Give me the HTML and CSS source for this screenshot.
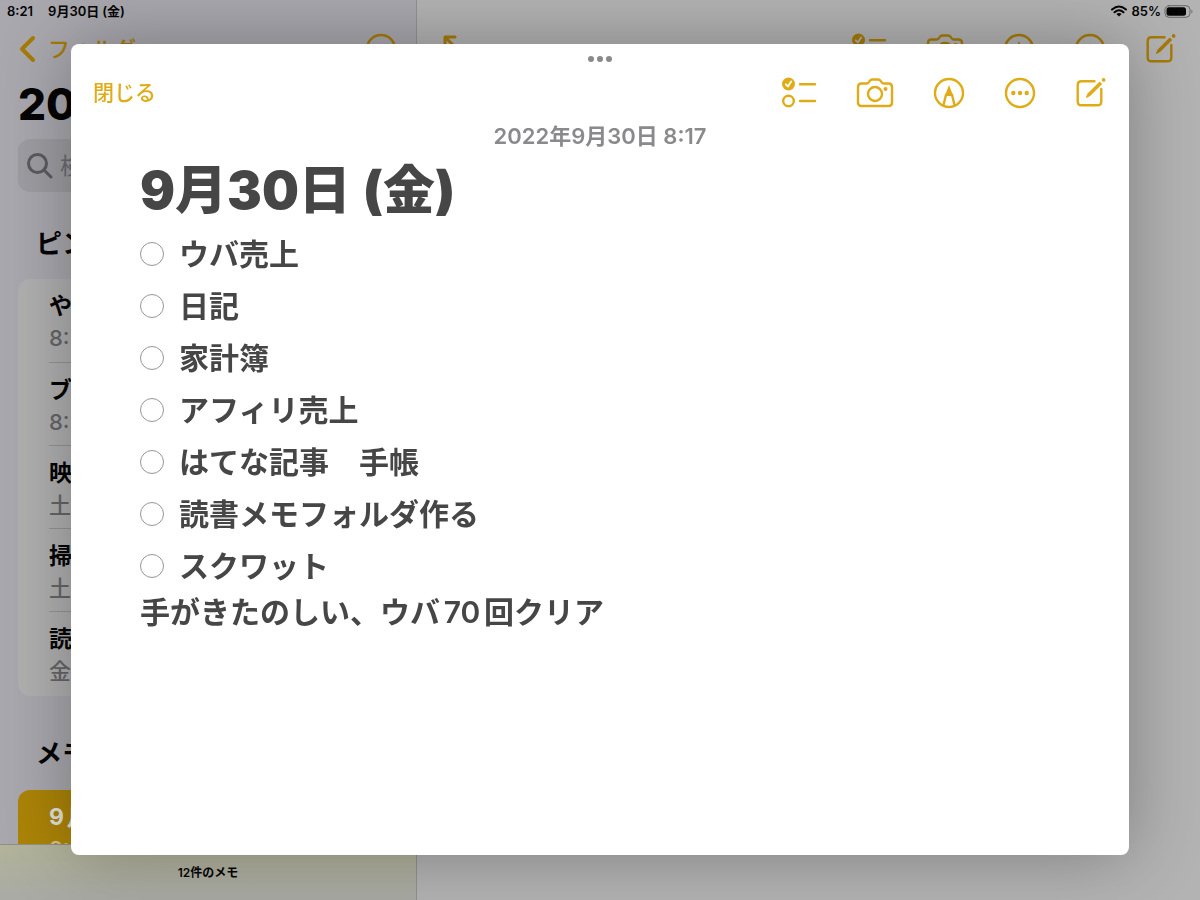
FILE: index.html
```
<!DOCTYPE html>
<html lang="ja">
  <head>
    <meta charset="UTF-8" />
    <meta name="viewport" content="width=device-width, initial-scale=1.0" />
    <title>メモ</title>
    <link rel="stylesheet" href="styles.css">
  </head>
  <body>
    <svg class="sprite" aria-hidden="true">
      <symbol id="checklist" viewBox="0 0 36 32">
        <circle cx="7.500" cy="7" r="6.500" class="dot" />
        <path class="tick" d="M4.800 7.300 6.900 9.500 10.200 4.500" />
        <circle cx="7.500" cy="24" r="5.300" />
        <path d="M19 7.200H34M19 24H34" />
      </symbol>
      <symbol id="camera" viewBox="0 0 38 32">
        <path d="M5.500 6.500h5.200c1 0 1.500-.4 2-1.100l1.300-1.800c.6-.8 1.200-1.100 2.200-1.100h6c1 0 1.600.3 2.200 1.100l1.300 1.800c.5.700 1 1.100 2 1.100h4.800c2.200 0 3.500 1.300 3.500 3.500v15.500c0 2.200-1.300 3.500-3.500 3.500h-27C3.300 29 2 27.700 2 25.500V10c0-2.200 1.300-3.500 3.500-3.500z" />
        <circle cx="19" cy="17" r="7" />
        <circle cx="29.500" cy="12" r="2" class="dot" />
      </symbol>
      <symbol id="pen" viewBox="0 0 32 32">
        <circle cx="16" cy="16" r="14" />
        <path d="M10.500 28 13 17.800M21.500 28 19 17.800" />
        <path class="dot" d="M16 8 20.200 19H11.800Z" />
      </symbol>
      <symbol id="more" viewBox="0 0 32 32">
        <circle cx="16" cy="16" r="14" />
        <circle cx="9.300" cy="16" r="2.200" class="dot" />
        <circle cx="16" cy="16" r="2.200" class="dot" />
        <circle cx="22.700" cy="16" r="2.200" class="dot" />
      </symbol>
      <symbol id="compose" viewBox="0 0 32 32">
        <path d="M19.500 4.200H6.500C4 4.200 2.700 5.700 2.700 8V24.500c0 2.500 1.300 3.800 3.800 3.800H22.500c2.500 0 3.800-1.300 3.800-3.800V12" />
        <path class="dot" d="M10.800 20.500 12.600 16.500 24.700 4.500 27.200 7 15.100 19 11.400 21z" />
        <circle cx="28.600" cy="2.900" r="1.900" class="dot" />
      </symbol>
    </svg>

    <div class="app">
      <div class="status">
        <span>8:21</span>
        <span>9月30日<span class="day">(金)</span></span>
        <svg class="wifi" viewBox="0 0 16 12" aria-label="Wi-Fi">
          <path d="M1 4.500Q8-1.500 15 4.500M3.500 7.300Q8 3.300 12.500 7.300" />
          <path class="dot" d="M8 11.500 5.400 8.900Q8 6.900 10.600 8.900z" />
        </svg>
        <span>85%</span>
        <svg class="battery" viewBox="0 0 30 13" aria-label="バッテリー">
          <rect x="1" y=".7" width="25" height="11.600" rx="4" />
          <rect x="2.500" y="2.200" width="19.500" height="8.600" rx="2.500" class="level" />
          <path class="nub" d="M27.500 4.500q2 2 0 4z" />
        </svg>
      </div>

      <aside class="sidebar">
        <nav class="sidebar-nav">
          <a class="back" href="#">
            <svg viewBox="0 0 18 28" aria-hidden="true"><path d="M15 3 4 14 15 25" /></svg>
            フォルダ
          </a>
          <button class="icon" aria-label="その他"><svg width="32" height="32"><use href="#more" /></svg></button>
        </nav>
        <h1>20</h1>
        <label class="search">
          <svg viewBox="0 0 28 28" aria-hidden="true"><circle cx="11.500" cy="11.500" r="9" /><path d="M18.500 18.500 25 25" /></svg>
          <input type="search" placeholder="検索" />
        </label>
        <h2>ピン</h2>
        <ul class="notes">
          <li><b>や</b><span>8:</span></li>
          <li><b>ブ</b><span>8:</span></li>
          <li><b>映</b><span>土</span></li>
          <li><b>掃</b><span>土</span></li>
          <li><b>読</b><span>金</span></li>
        </ul>
        <h2 class="second">メモ</h2>
        <ul class="notes selected">
          <li><b>9月</b><span>8:</span></li>
        </ul>
        <footer>12件のメモ</footer>
      </aside>

      <main class="editor">
        <button class="icon expand" aria-label="全画面">
          <svg width="30" height="30" viewBox="0 0 30 30"><path d="M4 12V3H14M4 3 14 13M26 18v9H16M26 27 16 17" /></svg>
        </button>
        <div class="tools">
          <button class="icon" aria-label="チェックリスト"><svg width="36" height="32"><use href="#checklist" /></svg></button>
          <button class="icon" aria-label="カメラ"><svg width="38" height="32"><use href="#camera" /></svg></button>
          <button class="icon" aria-label="マークアップ"><svg width="32" height="32"><use href="#pen" /></svg></button>
          <button class="icon" aria-label="その他"><svg width="32" height="32"><use href="#more" /></svg></button>
          <button class="icon" aria-label="新規メモ"><svg width="32" height="32"><use href="#compose" /></svg></button>
        </div>
      </main>
    </div>

    <section class="sheet" role="dialog" aria-label="クイックメモ">
      <div class="grabber"><i></i><i></i><i></i></div>
      <div class="sheet-bar">
        <button class="close">閉じる</button>
        <div class="tools">
          <button class="icon" aria-label="チェックリスト"><svg width="36" height="32"><use href="#checklist" /></svg></button>
          <button class="icon" aria-label="カメラ"><svg width="38" height="32"><use href="#camera" /></svg></button>
          <button class="icon" aria-label="マークアップ"><svg width="32" height="32"><use href="#pen" /></svg></button>
          <button class="icon" aria-label="その他"><svg width="32" height="32"><use href="#more" /></svg></button>
          <button class="icon" aria-label="新規メモ"><svg width="32" height="32"><use href="#compose" /></svg></button>
        </div>
      </div>
      <time datetime="2022-09-30T08:17">2022年9月30日 8:17</time>
      <article class="note">
        <h2>9月30日<span class="day">(金)</span></h2>
        <ul>
          <li><label><input type="checkbox" />ウバ売上</label></li>
          <li><label><input type="checkbox" />日記</label></li>
          <li><label><input type="checkbox" />家計簿</label></li>
          <li><label><input type="checkbox" />アフィリ売上</label></li>
          <li><label><input type="checkbox" />はてな記事　手帳</label></li>
          <li><label><input type="checkbox" />読書メモフォルダ作る</label></li>
          <li><label><input type="checkbox" />スクワット</label></li>
        </ul>
        <p>手がきたのしい、ウバ70回クリア</p>
      </article>
    </section>
  </body>
</html>
```
FILE: styles.css
```
* {
  box-sizing: border-box;
  margin: 0;
  padding: 0;
}
body {
  font-family: Inter, "Noto Sans CJK JP", sans-serif;
  color: #050505;
  height: 100vh;
  overflow: hidden;
}
button {
  border: none;
  background: none;
  font: inherit;
  cursor: pointer;
}
ul {
  list-style: none;
}
svg {
  display: block;
  fill: none;
  stroke: currentColor;
  stroke-width: 2.4;
  stroke-linecap: round;
  stroke-linejoin: round;
}
.sprite {
  position: absolute;
  width: 0;
  height: 0;
}
.dot {
  fill: currentColor;
  stroke: none;
}
.tick {
  stroke: var(--tick);
  stroke-width: 1.8;
}
.icon {
  color: inherit;
}

/* app behind the sheet */
.app {
  display: grid;
  grid-template-columns: 417px 1fr;
  grid-template-rows: 22px 1fr;
  height: 100vh;
  background: linear-gradient(90deg, #a9a8ae 416px, #929296 416px 417px, #b3b3b3 417px);
}
.status {
  grid-column: 1 / 3;
  display: flex;
  align-items: center;
  padding: 0 6px 0 7px;
  font-size: 13px;
  font-weight: 600;
  line-height: 22px;
}
.status > span:first-child {
  margin-right: 15px;
}
.status .day {
  margin-left: 3px;
}
.wifi {
  width: 16px;
  height: 12px;
  margin-left: auto;
  margin-right: 4px;
  stroke-width: 2;
}
.battery {
  width: 30px;
  height: 13px;
  margin-left: 3px;
  stroke: #666;
  stroke-width: 1;
}
.level {
  fill: #050505;
  stroke: none;
}
.nub {
  fill: #666;
  stroke: none;
}
.sidebar {
  display: flex;
  flex-direction: column;
  min-height: 0;
  overflow: hidden;
}
.sidebar > * {
  flex-shrink: 0;
}
.sidebar-nav {
  display: flex;
  justify-content: space-between;
  align-items: center;
  height: 54px;
  padding: 0 20px 0 18px;
  color: #a67b08;
}
.back {
  display: flex;
  align-items: center;
  gap: 12px;
  color: inherit;
  font-size: 22px;
  font-weight: 500;
  line-height: 24px;
  text-decoration: none;
}
.back svg {
  width: 18px;
  height: 28px;
  stroke-width: 4;
}
h1 {
  padding-left: 18px;
  font-size: 44px;
  font-weight: 800;
  line-height: 56px;
}
.search {
  display: flex;
  align-items: center;
  gap: 6px;
  height: 53px;
  margin: 7px 18px 0;
  padding-left: 8px;
  border-radius: 12px;
  background: #9d9da2;
  color: #5b5b60;
}
.search svg {
  width: 28px;
  height: 28px;
  stroke-width: 3;
}
.search input {
  flex: 1;
  min-width: 0;
  border: none;
  outline: none;
  background: none;
  font: inherit;
  font-size: 23px;
}
.search input::placeholder {
  color: #6b6b70;
}
.sidebar h2 {
  padding-left: 36px;
  margin: 32px 0 15px;
  font-size: 26px;
  font-weight: 700;
  line-height: 40px;
}
.sidebar .second {
  margin: 38px 0 16px;
}
.notes {
  margin: 0 18px;
  padding: 0 0 2px 31px;
  border-radius: 12px;
  background: #b0b0b0;
  text-autospace: normal;
}
.notes li {
  height: 83px;
  padding-top: 11px;
}
.notes li + li {
  border-top: 1px solid #959597;
}
.notes b,
.notes span {
  display: block;
  font-size: 23px;
  line-height: 32px;
}
.notes span {
  color: #66666a;
  font-size: 22px;
  font-weight: 500;
}
.notes.selected {
  background: #ac8407;
  color: #e2e2dc;
}
.notes.selected span {
  color: #d3c28c;
}
.sidebar footer {
  position: absolute;
  left: 0;
  bottom: 0;
  width: 416px;
  height: 56px;
  border-top: 1px solid #8f8f8b;
  background: linear-gradient(#b3b499, #a9aaa5);
  font-size: 12px;
  font-weight: 600;
  line-height: 55px;
  text-align: center;
}
.editor {
  display: flex;
  justify-content: space-between;
  align-items: center;
  height: 54px;
  padding: 0 23px 0 24px;
  color: #a67b08;
  --tick: #b3b3b3;
}
.expand svg {
  stroke-width: 3;
}
.tools {
  display: flex;
  gap: 39px;
}

/* note sheet */
.sheet {
  position: fixed;
  inset: 44px 71px 45px;
  border-radius: 8px;
  background: #fff;
  box-shadow: 0 0 72px rgba(0, 0, 0, 0.3);
  color: #464646;
  --tick: #fff;
}
.grabber {
  display: flex;
  justify-content: center;
  align-items: center;
  gap: 3px;
  height: 29px;
}
.grabber i {
  width: 6px;
  height: 6px;
  border-radius: 50%;
  background: #8a8a8a;
}
.sheet-bar {
  display: flex;
  justify-content: space-between;
  align-items: center;
  height: 40px;
  padding: 0 22px;
  color: #dfac17;
}
.close {
  color: inherit;
  font-size: 21px;
  font-weight: 500;
  line-height: 24px;
}
time {
  display: block;
  margin-top: 7px;
  color: #8a8a8c;
  font-size: 22px;
  font-weight: 600;
  line-height: 32px;
  text-align: center;
}
.note {
  padding: 9px 69px 0;
  font-size: 30px;
  font-weight: 600;
}
.note h2 {
  margin-bottom: 7px;
  font-size: 52px;
  font-weight: 900;
  line-height: 60px;
}
.note .day {
  margin-left: 12px;
}
.note label {
  display: flex;
  align-items: center;
  gap: 15px;
  height: 52px;
  line-height: 40px;
}
.note input {
  appearance: none;
  width: 24px;
  height: 24px;
  border: 1px solid #969696;
  border-radius: 50%;
}
.note p {
  line-height: 40px;
  text-autospace: normal;
}
```
